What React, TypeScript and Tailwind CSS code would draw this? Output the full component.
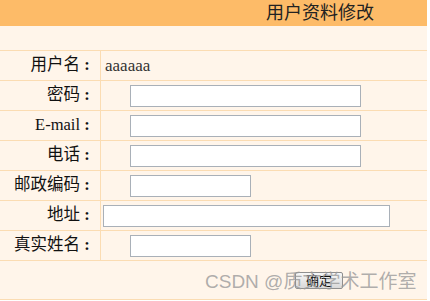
const font = { fontFamily: '"Liberation Serif", "Noto Sans CJK SC", serif' }

type Field = { label: string; width?: string; indent?: boolean; value?: string }

const fields: Field[] = [
    { label: '用户名', value: 'aaaaaa' },
    { label: '密码', width: 'w-[231px]', indent: true },
    { label: 'E-mail', width: 'w-[231px]', indent: true },
    { label: '电话', width: 'w-[231px]', indent: true },
    { label: '邮政编码', width: 'w-[121px]', indent: true },
    { label: '地址', width: 'w-[287px]' },
    { label: '真实姓名', width: 'w-[121px]', indent: true },
]

export default function App() {
    return (
        <div className="relative w-[430px] h-[301px] bg-white overflow-hidden" style={font}>
            <div className="w-[427px] bg-[#fff5ea]">
                <div className="h-[26px] bg-[#fdbb68] flex items-center pl-[266px] text-[18px] text-[#222]">
                    用户资料修改
                </div>
                <div className="h-[25px] border-b border-[#fbdcb2]" />

                {fields.map((f) => (
                    <div key={f.label} className="flex h-[30px] border-b border-[#fbdcb2]">
                        <div className="w-[101px] shrink-0 border-r border-[#fbdcb2] flex items-center justify-end pr-[6px] text-[16.5px] text-[#111]">
                            {f.label}
                            <span className="w-[14px] text-center font-bold">:</span>
                        </div>
                        <div className={`flex items-center ${f.indent ? 'pl-[29px]' : 'pl-[2px]'}`}>
                            {f.value ? (
                                <span className="text-[17px] text-[#333] pl-[2px]">{f.value}</span>
                            ) : (
                                <input
                                    className={`${f.width} h-[22px] bg-white border border-[#a9b0b8] outline-none`}
                                />
                            )}
                        </div>
                    </div>
                ))}

                <div className="h-[39px] flex items-center pl-[295px] border-b border-[#fbdcb2]">
                    <button className="w-[48px] h-[17px] text-[13px] leading-none text-[#111] rounded-[2px] border border-[#8f8f8f] bg-gradient-to-b from-[#f7f7f7] to-[#d9d9d9]">
                        确定
                    </button>
                </div>
            </div>

            <div
                className="absolute left-[205px] top-[268px] text-[19px] text-[#9a9a9a]/80 pointer-events-none whitespace-nowrap"
                style={{ fontFamily: '"Liberation Sans", "Noto Sans CJK SC", sans-serif' }}
            >
                CSDN @质文学术工作室
            </div>
        </div>
    )
}
